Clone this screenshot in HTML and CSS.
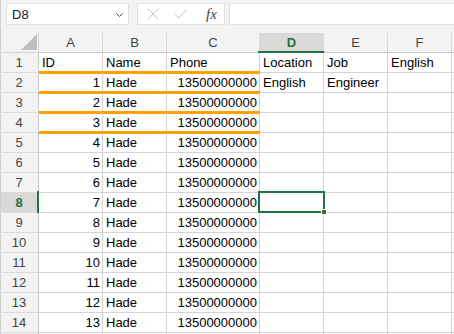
FILE: index.html
```html
<!DOCTYPE html>
<html lang="en">
<head>
    <meta charset="UTF-8">
    <meta name="viewport" content="width=device-width, initial-scale=1.0">
    <title>Sheet1</title>
    <link rel="stylesheet" href="styles.css">
</head>
<body>
    <div class="formula-bar">
        <div class="name-box">
            <span>D8</span>
            <svg class="chevron" width="7" height="4" viewBox="0 0 7 4"><polyline points="0.5,0.5 3.5,3.5 6.5,0.5" fill="none" stroke="#444" stroke-width="1"/></svg>
        </div>
        <div class="fx-box">
            <svg width="12" height="12" viewBox="0 0 12 12"><path d="M0.5 0.5 L11.5 11.5 M11.5 0.5 L0.5 11.5" stroke="#c2c2c2" stroke-width="1" fill="none"/></svg>
            <svg width="13" height="10" viewBox="0 0 13 10"><polyline points="0.5,4.5 4.5,9 12.5,0.5" stroke="#c2c2c2" stroke-width="1" fill="none"/></svg>
            <span class="fx">fx</span>
        </div>
        <div class="formula-input"></div>
    </div>

    <div class="sheet">
        <!-- column headers -->
        <div class="corner"><span class="corner-mark"></span></div>
        <div class="col-head">A</div>
        <div class="col-head">B</div>
        <div class="col-head">C</div>
        <div class="col-head active">D</div>
        <div class="col-head">E</div>
        <div class="col-head">F</div>
        <div class="col-head"></div>

        <div class="row-head">1</div>
        <div class="cell copy">ID</div>
        <div class="cell copy">Name</div>
        <div class="cell copy">Phone</div>
        <div class="cell">Location</div>
        <div class="cell">Job</div>
        <div class="cell">English</div>
        <div class="cell"></div>

        <div class="row-head">2</div>
        <div class="cell num copy">1</div>
        <div class="cell copy">Hade</div>
        <div class="cell num copy">13500000000</div>
        <div class="cell">English</div>
        <div class="cell">Engineer</div>
        <div class="cell"></div>
        <div class="cell"></div>

        <div class="row-head">3</div>
        <div class="cell num copy">2</div>
        <div class="cell copy">Hade</div>
        <div class="cell num copy">13500000000</div>
        <div class="cell"></div>
        <div class="cell"></div>
        <div class="cell"></div>
        <div class="cell"></div>

        <div class="row-head">4</div>
        <div class="cell num copy">3</div>
        <div class="cell copy">Hade</div>
        <div class="cell num copy">13500000000</div>
        <div class="cell"></div>
        <div class="cell"></div>
        <div class="cell"></div>
        <div class="cell"></div>

        <div class="row-head">5</div>
        <div class="cell num">4</div>
        <div class="cell">Hade</div>
        <div class="cell num">13500000000</div>
        <div class="cell"></div>
        <div class="cell"></div>
        <div class="cell"></div>
        <div class="cell"></div>

        <div class="row-head">6</div>
        <div class="cell num">5</div>
        <div class="cell">Hade</div>
        <div class="cell num">13500000000</div>
        <div class="cell"></div>
        <div class="cell"></div>
        <div class="cell"></div>
        <div class="cell"></div>

        <div class="row-head">7</div>
        <div class="cell num">6</div>
        <div class="cell">Hade</div>
        <div class="cell num">13500000000</div>
        <div class="cell"></div>
        <div class="cell"></div>
        <div class="cell"></div>
        <div class="cell"></div>

        <div class="row-head active">8</div>
        <div class="cell num">7</div>
        <div class="cell">Hade</div>
        <div class="cell num">13500000000</div>
        <div class="cell selected"></div>
        <div class="cell"></div>
        <div class="cell"></div>
        <div class="cell"></div>

        <div class="row-head">9</div>
        <div class="cell num">8</div>
        <div class="cell">Hade</div>
        <div class="cell num">13500000000</div>
        <div class="cell"></div>
        <div class="cell"></div>
        <div class="cell"></div>
        <div class="cell"></div>

        <div class="row-head">10</div>
        <div class="cell num">9</div>
        <div class="cell">Hade</div>
        <div class="cell num">13500000000</div>
        <div class="cell"></div>
        <div class="cell"></div>
        <div class="cell"></div>
        <div class="cell"></div>

        <div class="row-head">11</div>
        <div class="cell num">10</div>
        <div class="cell">Hade</div>
        <div class="cell num">13500000000</div>
        <div class="cell"></div>
        <div class="cell"></div>
        <div class="cell"></div>
        <div class="cell"></div>

        <div class="row-head">12</div>
        <div class="cell num">11</div>
        <div class="cell">Hade</div>
        <div class="cell num">13500000000</div>
        <div class="cell"></div>
        <div class="cell"></div>
        <div class="cell"></div>
        <div class="cell"></div>

        <div class="row-head">13</div>
        <div class="cell num">12</div>
        <div class="cell">Hade</div>
        <div class="cell num">13500000000</div>
        <div class="cell"></div>
        <div class="cell"></div>
        <div class="cell"></div>
        <div class="cell"></div>

        <div class="row-head">14</div>
        <div class="cell num">13</div>
        <div class="cell">Hade</div>
        <div class="cell num">13500000000</div>
        <div class="cell"></div>
        <div class="cell"></div>
        <div class="cell"></div>
        <div class="cell"></div>

        <div class="row-head"></div>
        <div class="cell"></div>
        <div class="cell"></div>
        <div class="cell"></div>
        <div class="cell"></div>
        <div class="cell"></div>
        <div class="cell"></div>
        <div class="cell"></div>
    </div>
</body>
</html>
```

FILE: styles.css
```css
html, body {
    margin: 0;
    padding: 0;
    height: 100%;
    overflow: hidden;
}
body {
    font-family: "Liberation Sans", Arial, sans-serif;
    font-size: 13px;
    color: #000;
    background: #fff;
}
.formula-bar {
    height: 33px;
    box-sizing: border-box;
    padding: 3px 0 0 6px;
    display: flex;
    align-items: flex-start;
    background: #f3f3f3;
    box-shadow: inset 1px 0 0 #cfcfcf;
}
.name-box {
    width: 123px;
    height: 22px;
    box-sizing: border-box;
    border: 1px solid #e1e1e1;
    background: #fff;
    display: flex;
    align-items: center;
    justify-content: space-between;
    padding: 0 5px 0 5px;
    color: #222;
}
.chevron {
    margin-top: 1px;
}
.fx-box {
    width: 88px;
    height: 22px;
    box-sizing: border-box;
    margin-left: 8px;
    border: 1px solid #e1e1e1;
    background: #fff;
    display: flex;
    align-items: center;
    gap: 15px;
    padding-left: 9px;
}
.fx {
    font-family: "Liberation Serif", "Times New Roman", serif;
    font-style: italic;
    font-size: 15px;
    color: #444;
    margin-left: 4px;
}
.formula-input {
    flex: 1;
    height: 22px;
    box-sizing: border-box;
    margin-left: 4px;
    border: 1px solid #e1e1e1;
    border-right: none;
    background: #fff;
}
.sheet {
    display: grid;
    grid-template-columns: 39px 64px 64px 93px 64px 64px 64px 64px;
    grid-auto-rows: 20px;
}
.sheet > div {
    box-sizing: border-box;
    border-right: 1px solid #d4d4d4;
    border-bottom: 1px solid #d4d4d4;
    line-height: 19px;
    white-space: nowrap;
    position: relative;
}
.corner {
    background: #f3f3f3;
    display: flex;
    align-items: flex-end;
    justify-content: flex-end;
    padding: 0 1px 2px 0;
    box-shadow: inset 1px 0 0 #cfcfcf;
}
.corner-mark {
    width: 0;
    height: 0;
    border-left: 16px solid transparent;
    border-bottom: 16px solid #bfbfbf;
}
.col-head, .row-head {
    background: #f3f3f3;
    color: #444;
    text-align: center;
}
.sheet > .col-head {
    border-right-color: #dadada;
    border-bottom-color: #c8c8c8;
}
.sheet > .row-head {
    border-right-color: #c8c8c8;
    border-bottom-color: #dadada;
    box-shadow: inset 1px 0 0 #cfcfcf;
}
.col-head.active, .row-head.active {
    background: #dad9d7;
    color: #217346;
    font-weight: bold;
}
.col-head.active::after {
    content: "";
    position: absolute;
    left: -2px;
    right: -2px;
    bottom: -1px;
    height: 2px;
    background: #217346;
}
.row-head.active::after {
    content: "";
    position: absolute;
    right: -1px;
    top: -2px;
    bottom: -1px;
    width: 2px;
    background: #217346;
}
.cell {
    padding: 0 2px 0 3px;
    overflow: visible;
}
.cell.num {
    text-align: right;
}
.cell.copy::after {
    content: "";
    position: absolute;
    left: 0;
    right: -1px;
    bottom: -2px;
    height: 3px;
    background: #ffa200;
}
.cell.selected {
    z-index: 2;
}
.cell.selected::after {
    content: "";
    position: absolute;
    left: -2px;
    right: -2px;
    top: -2px;
    bottom: -1px;
    border: 2px solid #217346;
    box-sizing: border-box;
}
.cell.selected::before {
    content: "";
    position: absolute;
    left: 61px;
    top: 16px;
    width: 4px;
    height: 4px;
    background: #217346;
    border: 1px solid #fff;
    z-index: 1;
}
```
